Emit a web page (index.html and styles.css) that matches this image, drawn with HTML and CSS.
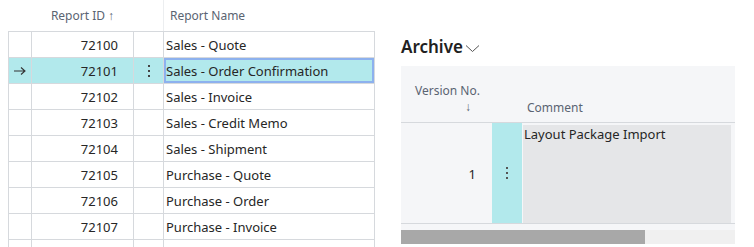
FILE: index.html
```html
<!DOCTYPE html>
<html lang="en">
<head>
  <meta charset="UTF-8">
  <title>Report Layouts</title>
  <link rel="stylesheet" href="styles.css">
</head>
<body>
  <div class="page">
    <div class="reports">
      <div class="head">
        <div class="h-cell"></div>
        <div class="h-cell num">Report ID <span class="sort">&#8593;</span></div>
        <div class="h-cell"></div>
        <div class="h-cell name">Report Name</div>
      </div>
      <div class="row">
        <div class="cell"></div><div class="cell num">72100</div><div class="cell"></div><div class="cell name">Sales - Quote</div>
      </div>
      <div class="row selected">
        <div class="cell mark">
          <svg width="14" height="10" viewBox="0 0 14 10"><path d="M1 5h11M8 1.5l4 3.5-4 3.5" fill="none" stroke="#333" stroke-width="1.1"/></svg>
        </div>
        <div class="cell num">72101</div>
        <div class="cell dots">
          <svg width="4" height="14" viewBox="0 0 4 14"><rect x="1" y="1" width="2" height="2" fill="#444"/><rect x="1" y="6" width="2" height="2" fill="#444"/><rect x="1" y="11" width="2" height="2" fill="#444"/></svg>
        </div>
        <div class="cell name focus">Sales - Order Confirmation</div>
      </div>
      <div class="row">
        <div class="cell"></div><div class="cell num">72102</div><div class="cell"></div><div class="cell name">Sales - Invoice</div>
      </div>
      <div class="row">
        <div class="cell"></div><div class="cell num">72103</div><div class="cell"></div><div class="cell name">Sales - Credit Memo</div>
      </div>
      <div class="row">
        <div class="cell"></div><div class="cell num">72104</div><div class="cell"></div><div class="cell name">Sales - Shipment</div>
      </div>
      <div class="row">
        <div class="cell"></div><div class="cell num">72105</div><div class="cell"></div><div class="cell name">Purchase - Quote</div>
      </div>
      <div class="row">
        <div class="cell"></div><div class="cell num">72106</div><div class="cell"></div><div class="cell name">Purchase - Order</div>
      </div>
      <div class="row">
        <div class="cell"></div><div class="cell num">72107</div><div class="cell"></div><div class="cell name">Purchase - Invoice</div>
      </div>
      <div class="row">
        <div class="cell"></div><div class="cell num"></div><div class="cell"></div><div class="cell name"></div>
      </div>
    </div>

    <div class="archive">
      <h2 class="title">Archive
        <svg width="15" height="9" viewBox="0 0 15 9"><path d="M1 1.5l6.5 6 6.5-6" fill="none" stroke="#555" stroke-width="1"/></svg>
      </h2>
      <div class="agrid">
        <div class="ahead">
          <div class="ah-ver">Version No.<span class="sort">&#8595;</span></div>
          <div></div>
          <div class="ah-comment">Comment</div>
        </div>
        <div class="arow">
          <div class="a-ver">1</div>
          <div class="a-dots">
            <svg width="4" height="14" viewBox="0 0 4 14"><rect x="1" y="1" width="2" height="2" fill="#555"/><rect x="1" y="6" width="2" height="2" fill="#555"/><rect x="1" y="11" width="2" height="2" fill="#555"/></svg>
          </div>
          <div class="a-comment">Layout Package Import</div>
        </div>
        <div class="scroll"><div class="thumb"></div></div>
      </div>
    </div>
  </div>
</body>
</html>
```

FILE: styles.css
```css
body {
  margin: 0;
  font-family: "Noto Sans", "Open Sans", sans-serif;
  font-size: 13px;
  color: #262626;
  background: #fff;
}

.page {
  display: flex;
  align-items: flex-start;
  padding-left: 8px;
  height: 247px;
  overflow: hidden;
}

/* left list */
.reports {
  width: 367px;
}

.head,
.row {
  display: grid;
  grid-template-columns: 23px 102px 30px 1fr;
}

.head {
  height: 32px;
  border-bottom: 1px solid #d6d9dd;
  box-sizing: border-box;
  color: #5a6472;
  font-size: 12px;
}

.h-cell {
  display: flex;
  align-items: center;
}

.h-cell.num {
  justify-content: flex-end;
  padding-right: 19px;
}

.h-cell.name {
  border-left: 1px solid #eceef0;
  padding-left: 6px;
}

.sort {
  margin-left: 3px;
  font-size: 12px;
}

.row {
  height: 26px;
  box-sizing: border-box;
  border-left: 1px solid #d6d9dd;
  border-bottom: 1px solid #d6d9dd;
}

.cell {
  display: flex;
  align-items: center;
  border-right: 1px solid #d6d9dd;
  min-width: 0;
}

.cell.num {
  justify-content: flex-end;
  padding-right: 15px;
}

.cell.name {
  padding-left: 2px;
  white-space: nowrap;
}

.cell.mark,
.cell.dots {
  justify-content: center;
}

.row.selected {
  background: #b2e9ec;
}

.cell.focus {
  box-shadow: inset 0 0 0 2px #8db1ee;
}

/* archive */
.archive {
  margin-left: 26px;
  width: 334px;
}

.title {
  margin: 36px 0 0;
  height: 30px;
  font-size: 17px;
  font-weight: 600;
  color: #212121;
  display: flex;
  align-items: flex-start;
  line-height: 22px;
}

.title svg {
  margin: 8px 0 0 2px;
}

.agrid {
  background: #f5f6f8;
}

.ahead {
  display: grid;
  grid-template-columns: 91px 30px 1fr;
  height: 57px;
  border-bottom: 1px solid #d6d9dd;
  box-sizing: border-box;
  color: #5a6472;
  font-size: 12px;
}

.ah-ver {
  padding: 17px 0 0 14px;
  display: flex;
  flex-direction: column;
  line-height: 16px;
}

.ah-ver .sort {
  margin: 0 0 0 50px;
}

.ah-comment {
  padding: 33px 0 0 5px;
}

.arow {
  display: grid;
  grid-template-columns: 91px 30px 1fr;
  height: 101px;
  padding: 1px 4px 0 0;
  border-bottom: 1px solid #d6d9dd;
  box-sizing: border-box;
}

.a-ver {
  display: flex;
  align-items: center;
  justify-content: flex-end;
  padding-right: 16px;
}

.a-dots {
  background: #b2e9ec;
  display: flex;
  align-items: center;
  justify-content: center;
  margin-top: -1px;
}

.a-comment {
  background: #e5e6e8;
  margin: 1px 0 0 1px;
  padding: 0 1px;
  line-height: 18px;
}

.scroll {
  margin-top: 6px;
  height: 14px;
  background: #f0f0f0;
}

.thumb {
  width: 244px;
  height: 100%;
  background: #a8a8a8;
}
```
